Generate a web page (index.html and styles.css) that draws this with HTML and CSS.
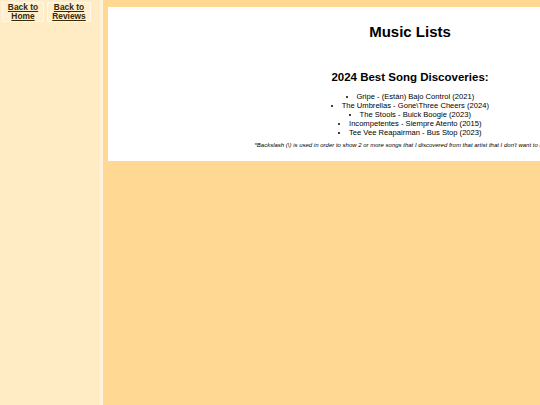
FILE: index.html
```html
<!DOCTYPE html>
<html lang="en">
<head>
    <meta charset="UTF-8">
    <meta name="viewport" content="width=device-width, initial-scale=1.0">
    <title>Music Lists</title>
    <link rel="stylesheet" href="styles.css">
</head>
<body>

    <!-- Barra lateral -->
    <div class="sidebar">
        <div class="nav">
            <a class="nav-btn" href="#">Back to<br>Home</a>
            <a class="nav-btn" href="#">Back to<br>Reviews</a>
        </div>
    </div>

    <!-- Contenido -->
    <div class="main">
        <div class="content">
            <h1>Music Lists</h1>
            <h2>2024 Best Song Discoveries:</h2>
            <ul class="songs">
                <li>Gripe - (Están) Bajo Control (2021)</li>
                <li>The Umbrellas - Gone\Three Cheers (2024)</li>
                <li>The Stools - Buick Boogie (2023)</li>
                <li>Incompetentes - Siempre Atento (2015)</li>
                <li>Tee Vee Reapairman - Bus Stop (2023)</li>
            </ul>
            <p class="note">*Backslash (\) is used in order to show 2 or more songs that I discovered from that artist that I don't want to leave out.</p>
        </div>
    </div>

</body>
</html>
```

FILE: styles.css
```css
* {
    margin: 0;
    padding: 0;
    box-sizing: border-box;
}

html, body {
    overflow: hidden;
}

body {
    font-family: "Liberation Sans", Arial, sans-serif;
    display: flex;
    min-height: 100vh;
    background-color: #ffd993;
}

/* Barra lateral */
.sidebar {
    width: 103px;
    flex-shrink: 0;
    background-color: #ffebc4;
    border-right: 3px solid #fff3dc;
    padding: 2px;
}

.nav {
    display: flex;
    gap: 3px;
}

.nav-btn {
    display: block;
    width: 42px;
    height: 20px;
    padding-top: 0;
    font-size: 8.4px;
    line-height: 9px;
    font-weight: bold;
    text-align: center;
    color: #3b2a00;
    background-color: #ffefcf;
    border: 1px solid #fff8e8;
}

.nav-btn:last-child {
    width: 44px;
}

/* Contenido */
.main {
    flex: 1;
    padding: 7px 0 0 5px;
}

.content {
    width: 604px;
    height: 154px;
    background-color: #ffffff;
    text-align: center;
    padding-top: 16px;
}

h1 {
    font-size: 15px;
    line-height: 18px;
}

h2 {
    font-size: 11.5px;
    line-height: 14px;
    margin-top: 29px;
}

.songs {
    list-style-position: inside;
    font-size: 7.6px;
    line-height: 9px;
    margin-top: 8px;
}

.note {
    font-size: 6px;
    font-style: italic;
    white-space: nowrap;
    margin-top: 5px;
}
```
